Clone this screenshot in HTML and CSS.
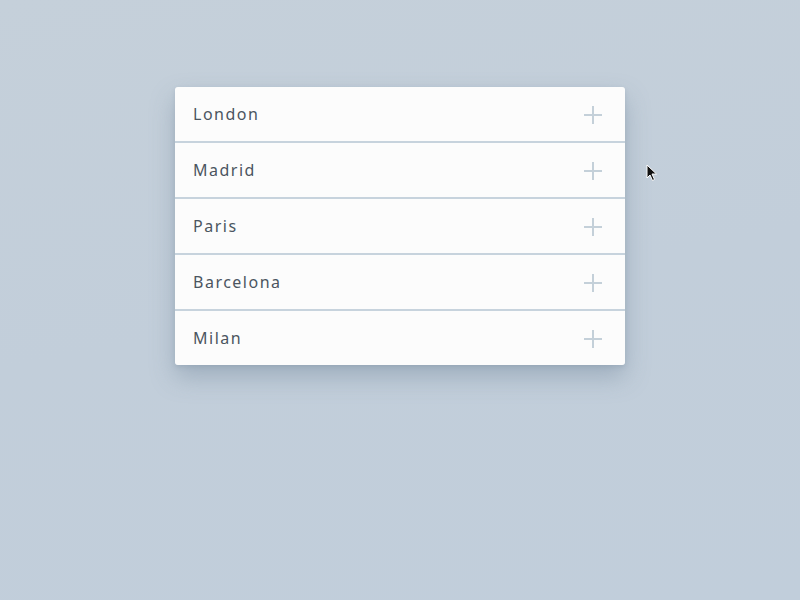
FILE: index.html
```html
<!DOCTYPE html>
<html>
<head>
<meta charset="utf-8">
<link rel="stylesheet" href="styles.css">
</head>
<body>
<div class="stage">
  <ul class="accordion">
    <li class="item"><span class="label">London</span><span class="plus"></span></li>
    <li class="item"><span class="label">Madrid</span><span class="plus"></span></li>
    <li class="item"><span class="label">Paris</span><span class="plus"></span></li>
    <li class="item"><span class="label">Barcelona</span><span class="plus"></span></li>
    <li class="item"><span class="label">Milan</span><span class="plus"></span></li>
  </ul>
  <svg class="cursor" width="12" height="18" viewBox="0 0 12 18">
    <path d="M1 1 L1 14 L4 11 L6.5 16.5 L8.5 15.5 L6 10 L10.5 10 Z" fill="#111" stroke="#fff" stroke-width="1"/>
  </svg>
</div>
</body>
</html>
```

FILE: styles.css
```css
html, body {
  margin: 0;
  padding: 0;
  width: 800px;
  height: 600px;
  overflow: hidden;
}
body {
  background: linear-gradient(170deg, #c5d0da 0%, #c2ceda 50%, #c1cedb 100%);
  font-family: "Noto Sans", "Open Sans", sans-serif;
}
.stage {
  position: relative;
  width: 800px;
  height: 600px;
  padding-top: 87px;
  box-sizing: border-box;
}
.accordion {
  list-style: none;
  margin: 0 auto;
  padding: 0;
  width: 450px;
  background: #c7d3dd;
  border-radius: 3px;
  box-shadow: 0 12px 24px rgba(115, 135, 155, 0.45), 0 2px 4px rgba(115, 135, 155, 0.25);
  display: flex;
  flex-direction: column;
  gap: 2px;
  overflow: hidden;
}
.item {
  height: 54px;
  background: #fcfcfc;
  display: flex;
  align-items: center;
  justify-content: space-between;
  padding: 0 23px 0 18px;
}
.label {
  font-size: 16px;
  letter-spacing: 1.5px;
  color: #4b5560;
}
.plus {
  position: relative;
  width: 18px;
  height: 18px;
  margin-top: 2px;
}
.plus::before, .plus::after {
  content: "";
  position: absolute;
  background: #c4d0d9;
}
.plus::before {
  left: 0;
  right: 0;
  top: 8px;
  height: 2px;
}
.plus::after {
  top: 0;
  bottom: 0;
  left: 8px;
  width: 2px;
}
.cursor {
  position: absolute;
  left: 646px;
  top: 164px;
}
```
